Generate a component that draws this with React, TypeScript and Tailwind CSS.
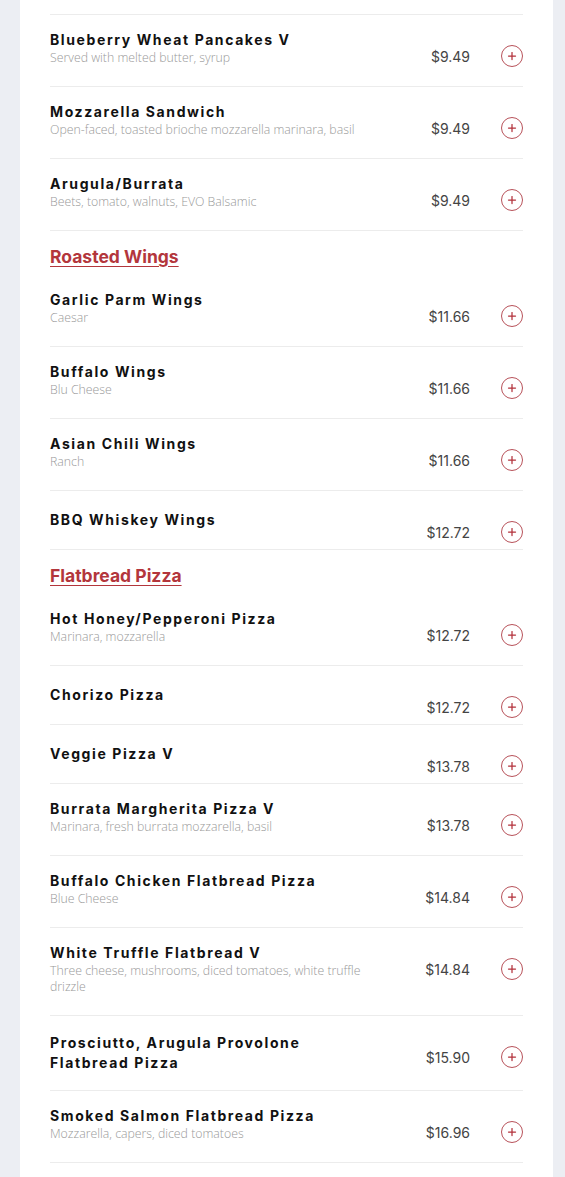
import { Plus } from "lucide-react";

type Item = { name: string; desc?: string; price: string };
type Block = { heading?: string; items: Item[] };

const blocks: Block[] = [
  {
    items: [
      { name: "Blueberry Wheat Pancakes V", desc: "Served with melted butter, syrup", price: "$9.49" },
      { name: "Mozzarella Sandwich", desc: "Open-faced, toasted brioche mozzarella marinara, basil", price: "$9.49" },
      { name: "Arugula/Burrata", desc: "Beets, tomato, walnuts, EVO Balsamic", price: "$9.49" },
    ],
  },
  {
    heading: "Roasted Wings",
    items: [
      { name: "Garlic Parm Wings", desc: "Caesar", price: "$11.66" },
      { name: "Buffalo Wings", desc: "Blu Cheese", price: "$11.66" },
      { name: "Asian Chili Wings", desc: "Ranch", price: "$11.66" },
      { name: "BBQ Whiskey Wings", price: "$12.72" },
    ],
  },
  {
    heading: "Flatbread Pizza",
    items: [
      { name: "Hot Honey/Pepperoni Pizza", desc: "Marinara, mozzarella", price: "$12.72" },
      { name: "Chorizo Pizza", price: "$12.72" },
      { name: "Veggie Pizza V", price: "$13.78" },
      { name: "Burrata Margherita Pizza V", desc: "Marinara, fresh burrata mozzarella, basil", price: "$13.78" },
      { name: "Buffalo Chicken Flatbread Pizza", desc: "Blue Cheese", price: "$14.84" },
      {
        name: "White Truffle Flatbread V",
        desc: "Three cheese, mushrooms, diced tomatoes, white truffle drizzle",
        price: "$14.84",
      },
      { name: "Prosciutto, Arugula Provolone Flatbread Pizza", price: "$15.90" },
      { name: "Smoked Salmon Flatbread Pizza", desc: "Mozzarella, capers, diced tomatoes", price: "$16.96" },
    ],
  },
];

function MenuRow({ item }: { item: Item }) {
  return (
    <div className="flex border-b border-[#ececec]">
      <div
        className={
          item.desc
            ? "flex flex-1 flex-col pt-[15px] pb-[20px] pr-2"
            : "flex flex-1 flex-col justify-center py-[17px] pr-2"
        }
      >
        <h3 className="max-w-[300px] font-['Inter',sans-serif] text-[14px] font-bold leading-[20px] tracking-[1.6px] text-[#111]">
          {item.name}
        </h3>
        {item.desc && (
          <p className="max-w-[325px] font-['Open_Sans',sans-serif] text-[12.3px] font-light leading-[16px] text-[#999]">
            {item.desc}
          </p>
        )}
      </div>
      <div className="flex w-[130px] shrink-0 items-start justify-end pt-[30px] pb-[6px]">
        <div className="flex h-[22px] items-center gap-[31px]">
          <span className="font-['Inter',sans-serif] text-[14px] font-normal text-[#444]">{item.price}</span>
          <button className="flex h-[22px] w-[22px] items-center justify-center rounded-full border border-[#b8525a] text-[#b3303a]">
            <Plus size={12} strokeWidth={2.5} />
          </button>
        </div>
      </div>
    </div>
  );
}

export default function App() {
  return (
    <div className="min-h-screen bg-[#eceef3] pl-5 pr-3">
      <div className="bg-white px-[30px] pb-10">
        <div className="h-[15px] border-b border-[#ececec]"></div>
        {blocks.map((block, i) => (
          <div key={i}>
            {block.heading && (
              <h2 className="pt-[15px] pb-[7px] font-['Inter',sans-serif] text-[17.5px] font-bold leading-[22px] text-[#b3363c] underline underline-offset-[3px]">
                {block.heading}
              </h2>
            )}
            {block.items.map((item) => (
              <MenuRow key={item.name} item={item} />
            ))}
          </div>
        ))}
      </div>
    </div>
  );
}
